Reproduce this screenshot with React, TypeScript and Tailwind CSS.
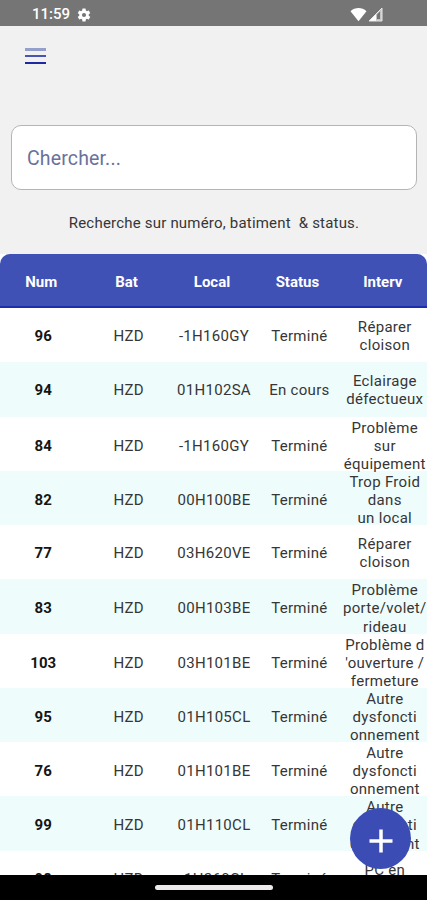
const rows = [
  { num: "96", local: "-1H160GY", status: "Terminé", interv: ["Réparer", "cloison"] },
  { num: "94", local: "01H102SA", status: "En cours", interv: ["Eclairage", "défectueux"] },
  { num: "84", local: "-1H160GY", status: "Terminé", interv: ["Problème", "sur", "équipement"] },
  { num: "82", local: "00H100BE", status: "Terminé", interv: ["Trop Froid", "dans", "un local"] },
  { num: "77", local: "03H620VE", status: "Terminé", interv: ["Réparer", "cloison"] },
  { num: "83", local: "00H103BE", status: "Terminé", interv: ["Problème", "porte/volet/", "rideau"] },
  { num: "103", local: "03H101BE", status: "Terminé", interv: ["Problème d", "'ouverture /", "fermeture"] },
  { num: "95", local: "01H105CL", status: "Terminé", interv: ["Autre", "dysfoncti", "onnement"] },
  { num: "76", local: "01H101BE", status: "Terminé", interv: ["Autre", "dysfoncti", "onnement"] },
  { num: "99", local: "01H110CL", status: "Terminé", interv: ["Autre", "dysfoncti", "onnement"] },
  { num: "98", local: "-1H260CL", status: "Terminé", interv: ["PC en", "panne"] },
];

function StatusBar() {
  return (
    <header className="flex h-[26px] shrink-0 items-center justify-between bg-[#757575] pl-[32px] pr-[44px] pt-[3px] text-white">
      <div className="flex items-center gap-[6px]">
        <span className="w-[38px] text-[15px] leading-none font-medium">11:59</span>
        <svg width="16" height="16" viewBox="0 0 24 24" fill="currentColor">
          <path d="M19.14 12.94c.04-.3.06-.61.06-.94 0-.32-.02-.64-.07-.94l2.03-1.58a.49.49 0 0 0 .12-.61l-1.92-3.32a.49.49 0 0 0-.59-.22l-2.39.96a7 7 0 0 0-1.62-.94l-.36-2.54a.48.48 0 0 0-.48-.41h-3.84a.48.48 0 0 0-.47.41l-.36 2.54c-.59.24-1.13.57-1.62.94l-2.39-.96a.48.48 0 0 0-.59.22L2.74 8.87a.47.47 0 0 0 .12.61l2.03 1.58a6 6 0 0 0 0 1.88l-2.03 1.58a.49.49 0 0 0-.12.61l1.92 3.32c.12.22.37.29.59.22l2.39-.96c.5.38 1.03.7 1.62.94l.36 2.54c.05.24.24.41.48.41h3.84c.24 0 .44-.17.47-.41l.36-2.54c.59-.24 1.13-.56 1.62-.94l2.39.96c.22.08.47 0 .59-.22l1.92-3.32a.47.47 0 0 0-.12-.61zM12 15.1a3.1 3.1 0 1 1 0-6.2 3.1 3.1 0 0 1 0 6.2" />
        </svg>
      </div>
      <div className="flex items-center gap-px">
        <svg width="17" height="15" viewBox="0 0 17 15" fill="currentColor">
          <path d="M.5 4.200C5-.1 12-.1 16.500 4.200L8.500 14.300z" />
        </svg>
        <svg width="15" height="15" viewBox="0 0 15 15">
          <path d="M14 1v13H1z" fill="#c4c4c4" />
          <path d="M8 7v7H1z" fill="white" />
          <path d="M9 7.500l3-3V12H9z" fill="#757575" />
          <path d="M1 14L14 1v13z" fill="none" stroke="#e8e8e8" strokeWidth="1" />
        </svg>
      </div>
    </header>
  );
}

export default function App() {
  return (
    <div className="relative flex h-[900px] w-[427px] flex-col overflow-hidden bg-[#f1f1f1] font-['Roboto',sans-serif] text-[#363636]">
      <StatusBar />
      <button aria-label="Menu" className="mt-[22px] ml-[25px] flex h-[17px] w-[21px] shrink-0 flex-col">
        <span className="h-[3px] w-full bg-[#949fcc]" />
        <span className="mt-[4px] h-[2px] w-full bg-[#4953b4]" />
        <span className="mt-[5px] h-[2px] w-full bg-[#2029a4]" />
      </button>
      <div className="mt-[60px] mr-[10px] ml-[11px] flex h-[65px] shrink-0 items-center rounded-[10px] border border-[#b5b5b5] bg-white px-[15px] pt-[3px]">
        <input
          aria-label="Chercher"
          placeholder="Chercher..."
          className="w-full bg-transparent text-[19.5px] tracking-[0.15px] outline-none placeholder:text-[#69719c]"
        />
      </div>
      <p className="mt-[24px] h-[18px] shrink-0 pl-[1px] text-center text-[15px] leading-[18px] tracking-[0.2px] whitespace-pre">
        Recherche sur numéro, batiment  &amp; status.
      </p>
      <div className="mt-[22px] shrink-0 bg-white">
        <div className="grid h-[54px] grid-cols-5 items-center rounded-t-[10px] border-b-2 border-[#1d2dac] bg-[#3f51b5] pt-[3px] text-center text-[15px] leading-[18px] font-bold text-white *:pr-[3px]">
          <span>Num</span>
          <span>Bat</span>
          <span>Local</span>
          <span>Status</span>
          <span>Interv</span>
        </div>
      </div>
      <main className="min-h-0 flex-1 overflow-hidden bg-white">
        {rows.map((row) => (
          <div
            key={row.num}
            className="grid h-[54.28px] grid-cols-5 items-center pt-[2px] text-center text-[15px] leading-[18.1px] tracking-[0.3px] odd:bg-white even:bg-[#effcfc] *:pl-[1px]"
          >
            <span className="font-bold tracking-normal text-[#151515]">{row.num}</span>
            <span>HZD</span>
            <span>{row.local}</span>
            <span>{row.status}</span>
            <span className="whitespace-nowrap">
              {row.interv.map((line) => (
                <span key={line} className="block">{line}</span>
              ))}
            </span>
          </div>
        ))}
      </main>
      <footer className="flex h-[25px] shrink-0 justify-center bg-black pt-[10px]">
        <div className="h-[5px] w-[118px] rounded-full bg-[#eeeaec]" />
      </footer>
      <button aria-label="Ajouter" className="absolute top-[808px] left-[350px] flex size-[61px] items-center justify-center rounded-full bg-[#3b4cb4] text-white">
        <svg width="24" height="24" viewBox="0 0 24 24" fill="none" stroke="currentColor" strokeWidth="3.5" className="mt-[5px]">
          <path d="M12 .5v23M.5 12h23" />
        </svg>
      </button>
    </div>
  );
}
